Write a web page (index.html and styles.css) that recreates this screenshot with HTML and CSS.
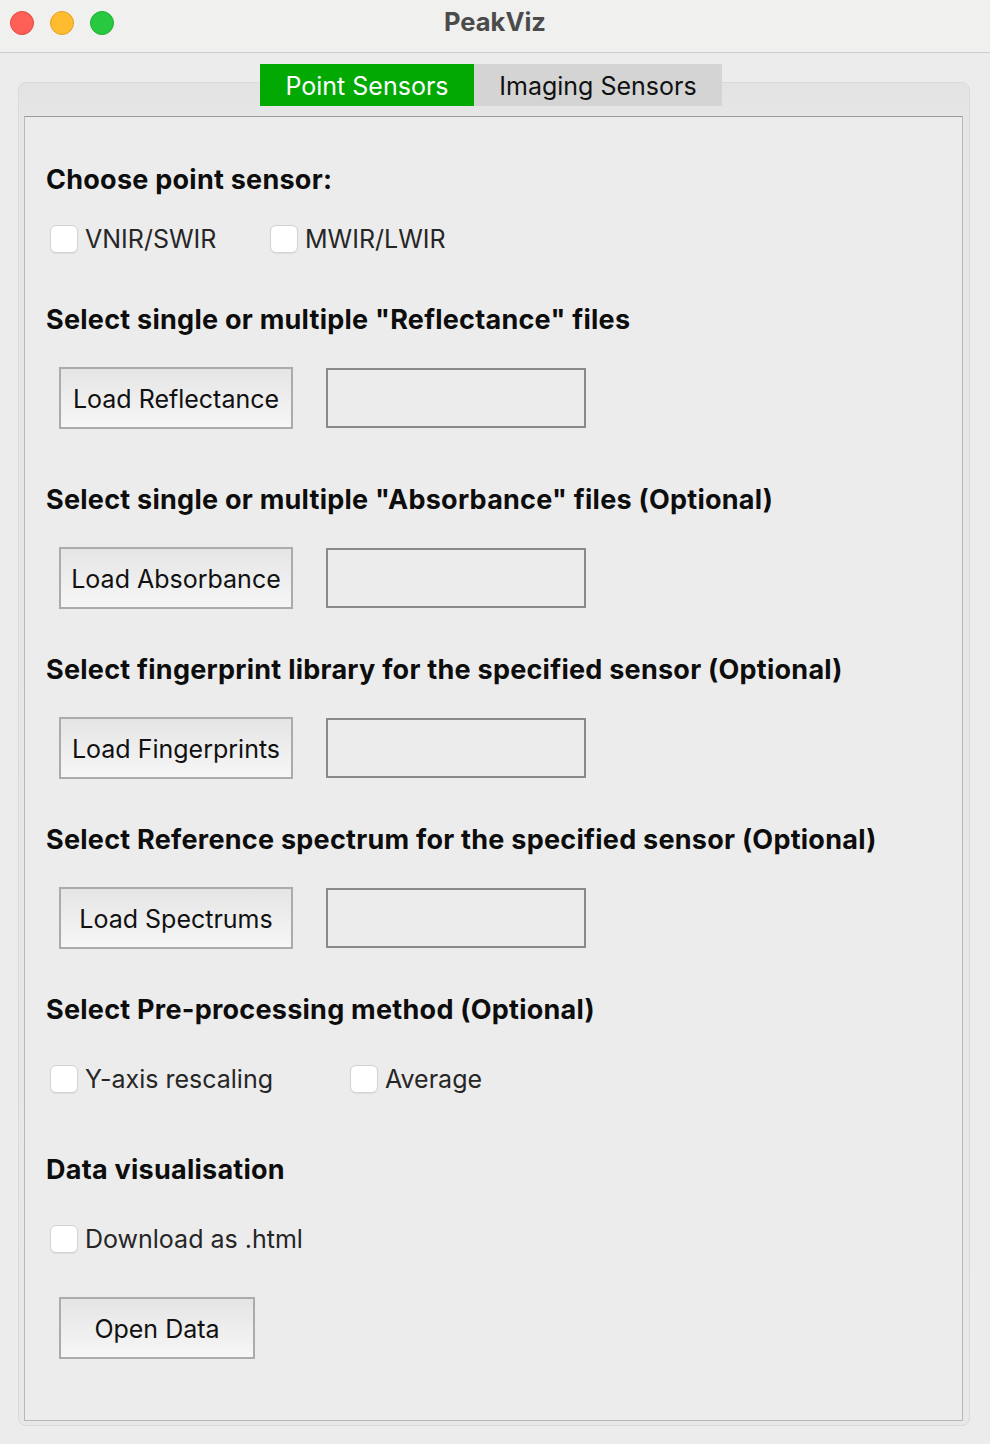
FILE: index.html
```html
<!DOCTYPE html>
<html>
<head>
<meta charset="utf-8">
<title>PeakViz</title>
<link rel="stylesheet" href="styles.css">
</head>
<body>
<div class="window">
  <div class="titlebar">
    <div class="lights">
      <span class="light red"></span>
      <span class="light yellow"></span>
      <span class="light green"></span>
    </div>
    <div class="title">PeakViz</div>
  </div>
  <div class="main">
    <div class="tabs">
      <div class="tab active">Point Sensors</div>
      <div class="tab">Imaging Sensors</div>
    </div>
    <div class="frame">
      <div class="pane">
        <div class="heading h1">Choose point sensor:</div>
        <div class="checks c1">
          <label class="check w220"><span class="box"></span><span>VNIR/SWIR</span></label>
          <label class="check"><span class="box"></span><span>MWIR/LWIR</span></label>
        </div>
        <div class="heading h2">Select single or multiple "Reflectance" files</div>
        <div class="loadrow">
          <div class="btn">Load Reflectance</div>
          <div class="field"></div>
        </div>
        <div class="heading h3">Select single or multiple "Absorbance" files (Optional)</div>
        <div class="loadrow">
          <div class="btn">Load Absorbance</div>
          <div class="field"></div>
        </div>
        <div class="heading h4">Select fingerprint library for the specified sensor (Optional)</div>
        <div class="loadrow">
          <div class="btn">Load Fingerprints</div>
          <div class="field"></div>
        </div>
        <div class="heading h4">Select Reference spectrum for the specified sensor (Optional)</div>
        <div class="loadrow">
          <div class="btn">Load Spectrums</div>
          <div class="field"></div>
        </div>
        <div class="heading h4">Select Pre-processing method (Optional)</div>
        <div class="checks c2">
          <label class="check w300"><span class="box"></span><span>Y-axis rescaling</span></label>
          <label class="check"><span class="box"></span><span>Average</span></label>
        </div>
        <div class="heading h7">Data visualisation</div>
        <div class="checks c2">
          <label class="check"><span class="box"></span><span>Download as .html</span></label>
        </div>
        <div class="btn open">Open Data</div>
      </div>
    </div>
  </div>
</div>
</body>
</html>
```

FILE: styles.css
```css
* { box-sizing: border-box; }
html, body {
  margin: 0;
  padding: 0;
  background: #ececec;
  font-family: Inter, "Noto Sans", "Liberation Sans", sans-serif;
}
.window {
  width: 990px;
  height: 1444px;
  background: #ececec;
  display: flex;
  flex-direction: column;
}
.titlebar {
  height: 53px;
  background: #f0f0ef;
  border-bottom: 1px solid #cdcdcd;
  display: flex;
  align-items: center;
  position: relative;
  flex-shrink: 0;
}
.lights {
  display: flex;
  gap: 16px;
  padding-left: 10px;
  margin-top: -6px;
}
.light {
  width: 24px;
  height: 24px;
  border-radius: 50%;
  display: block;
}
.red { background: #fe5f57; border: 1px solid #e2463f; }
.yellow { background: #febc2e; border: 1px solid #e0a028; }
.green { background: #28c840; border: 1px solid #1dad2b; }
.title {
  position: absolute;
  left: 0;
  right: 0;
  top: 7px;
  text-align: center;
  font-weight: 700;
  font-size: 25.5px;
  color: #4b4b4b;
  line-height: 30px;
}
.main {
  padding: 11px 20px 0 18px;
}
.tabs {
  display: flex;
  padding-left: 242px;
  position: relative;
  z-index: 1;
}
.tab {
  height: 42px;
  line-height: 44px;
  font-size: 25px;
  color: #111;
  background: #d4d4d4;
  text-align: center;
}
.tab.active {
  background: #01a902;
  color: #fff;
  width: 214px;
}
.tab:not(.active) {
  width: 248px;
}
.frame {
  margin-top: -24px;
  width: 952px;
  height: 1344px;
  border: 1px solid #dadada;
  border-radius: 8px;
  background: linear-gradient(#e3e3e3, #e6e6e6 34px, #e8e8e8);
  padding: 33px 6px 4px 5px;
}
.pane {
  height: 100%;
  border: 1px solid #b8b8b8;
  border-top-color: #9a9a9a;
  background: #ececec;
  padding: 42px 0 0 21px;
  display: flex;
  flex-direction: column;
  align-items: flex-start;
}
.heading {
  height: 40px;
  line-height: 41px;
  font-size: 27px;
  font-weight: 700;
  color: #0d0d0d;
  letter-spacing: 0.25px;
  white-space: nowrap;
}
.h2 { margin-top: 45px; }
.h3 { margin-top: 50px; }
.h4 { margin-top: 40px; }
.h7 { margin-top: 55px; }
.checks {
  display: flex;
  align-items: center;
  height: 30px;
  padding-left: 4px;
}
.c1 { margin-top: 25px; }
.c2 { margin-top: 35px; }
.check {
  display: flex;
  align-items: center;
  gap: 7px;
  font-size: 25px;
  color: #262626;
}
.w220 { width: 220px; }
.w300 { width: 300px; }
.box {
  width: 28px;
  height: 28px;
  border-radius: 6px;
  background: #fff;
  border: 1px solid #d2d2d2;
  box-shadow: 0 1px 1px rgba(0,0,0,0.06);
  display: block;
}
.loadrow {
  display: flex;
  align-items: center;
  gap: 33px;
  margin-top: 28px;
  padding-left: 13px;
}
.btn {
  width: 234px;
  height: 62px;
  border: 2px solid #ababab;
  background: linear-gradient(#e5e5e5, #f6f6f6);
  display: flex;
  align-items: center;
  justify-content: center;
  font-size: 25px;
  color: #111;
  padding-top: 1px;
}
.field {
  width: 260px;
  height: 60px;
  border: 2px solid #8a8a8a;
  background: #ececec;
}
.btn.open {
  width: 196px;
  margin-top: 43px;
  margin-left: 13px;
}
```
